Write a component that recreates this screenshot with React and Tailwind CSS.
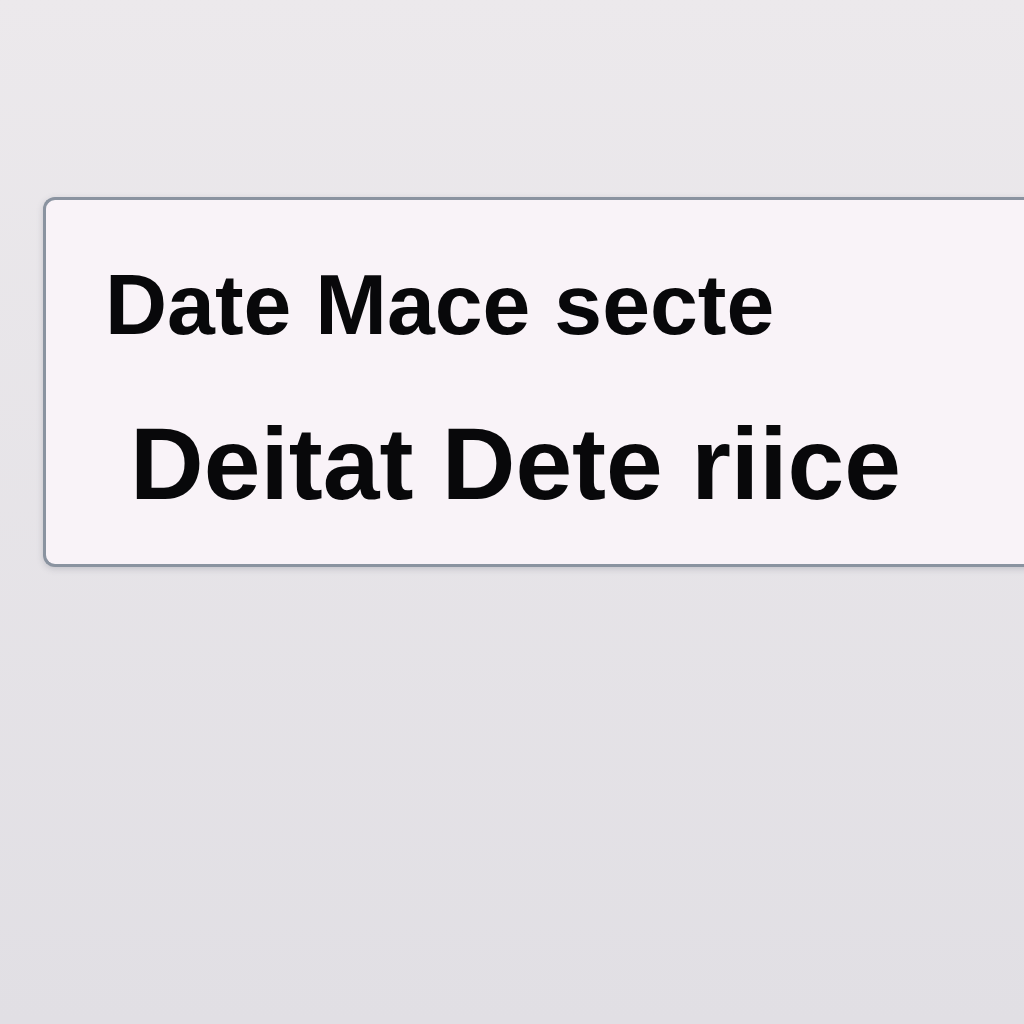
export default function App() {
    return (
        <div className="h-[1024px] w-[1024px] overflow-hidden bg-gradient-to-b from-[#ece9ec] to-[#e1dfe4] pt-[197px] pl-[43px]">
            <div
                className="w-[1010px] h-[370px] rounded-l-[12px] border-[3px] border-r-0 border-[#8a93a0] bg-[#f9f3f8] pt-[61px] pl-[59px] shadow-[0_2px_6px_rgba(90,95,110,0.25)]"
                style={{ fontFamily: '"Liberation Sans", Arial, sans-serif' }}
            >
                <p className="text-[86px] font-bold leading-none text-[#08080a]">
                    Date Mace secte
                </p>
                <p className="mt-[66px] ml-[25px] text-[102px] font-bold leading-none text-[#08080a]">
                    Deitat Dete riice
                </p>
            </div>
        </div>
    );
}
